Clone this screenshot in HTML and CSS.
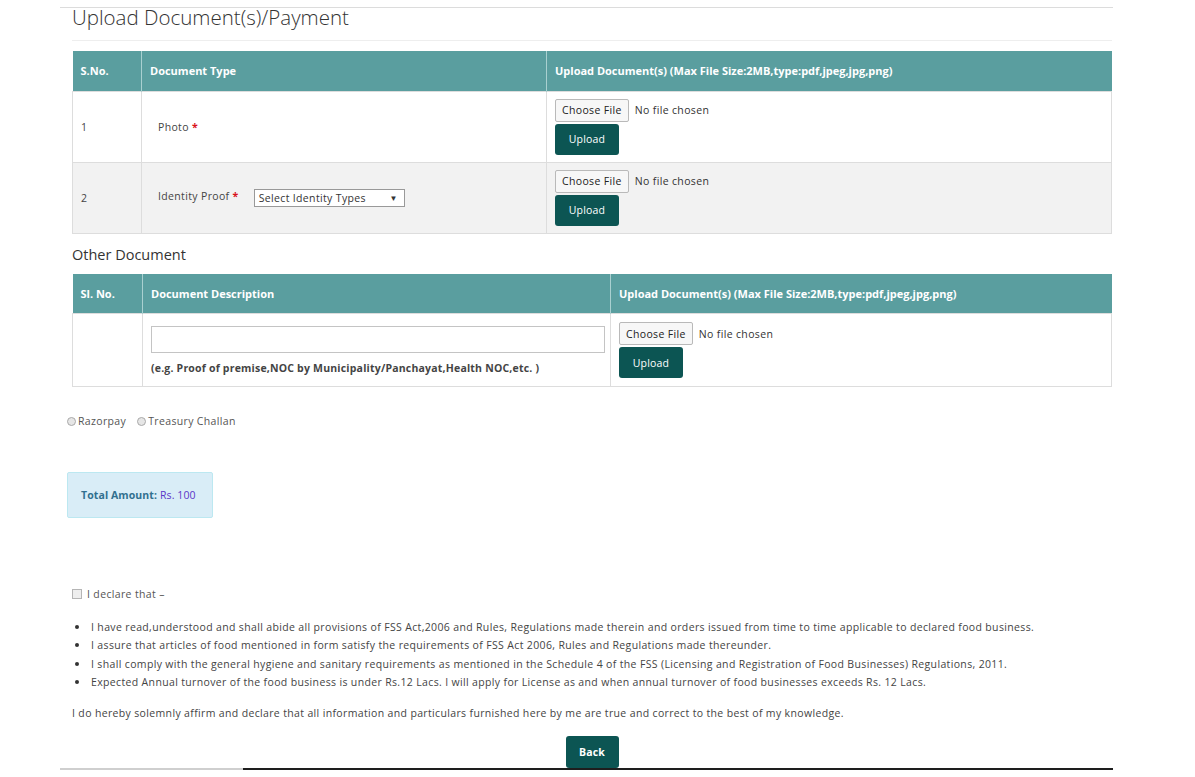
FILE: index.html
```html
<!DOCTYPE html>
<html lang="en">
<head>
<meta charset="utf-8">
<title>Upload Document(s)/Payment</title>
<link rel="stylesheet" href="styles.css">
</head>
<body>
<div class="page">
  <div class="topline"></div>
  <h2 class="title">Upload Document(s)/Payment</h2>
  <div class="rule"></div>

  <table class="grid docs">
    <colgroup><col class="c1"><col class="c2"><col class="c3"></colgroup>
    <thead>
      <tr><th>S.No.</th><th>Document Type</th><th>Upload Document(s) (Max File Size:2MB,type:pdf,jpeg,jpg,png)</th></tr>
    </thead>
    <tbody>
      <tr>
        <td>1</td>
        <td><span class="doc-label">Photo <span class="req">*</span></span></td>
        <td>
          <div class="file"><span class="file-btn">Choose File</span><span class="file-name">No file chosen</span></div>
          <button class="btn">Upload</button>
        </td>
      </tr>
      <tr class="alt">
        <td>2</td>
        <td><span class="doc-label">Identity Proof <span class="req">*</span></span><span class="select">Select Identity Types<span class="caret">&#9660;</span></span></td>
        <td>
          <div class="file"><span class="file-btn">Choose File</span><span class="file-name">No file chosen</span></div>
          <button class="btn">Upload</button>
        </td>
      </tr>
    </tbody>
  </table>

  <h3 class="subtitle">Other Document</h3>

  <table class="grid other">
    <colgroup><col class="o1"><col class="o2"><col class="o3"></colgroup>
    <thead>
      <tr><th>Sl. No.</th><th>Document Description</th><th>Upload Document(s) (Max File Size:2MB,type:pdf,jpeg,jpg,png)</th></tr>
    </thead>
    <tbody>
      <tr>
        <td></td>
        <td>
          <div class="text-input"></div>
          <div class="hint">(e.g. Proof of premise,NOC by Municipality/Panchayat,Health NOC,etc. )</div>
        </td>
        <td>
          <div class="file"><span class="file-btn">Choose File</span><span class="file-name">No file chosen</span></div>
          <button class="btn">Upload</button>
        </td>
      </tr>
    </tbody>
  </table>

  <div class="pay">
    <label class="radio"><span class="dot"></span>Razorpay</label>
    <label class="radio"><span class="dot"></span>Treasury Challan</label>
  </div>

  <div class="total"><b>Total Amount:</b> <span class="amount">Rs. 100</span></div>

  <label class="declare"><span class="box"></span>I declare that &ndash;</label>

  <ul class="points">
    <li>I have read,understood and shall abide all provisions of FSS Act,2006 and Rules, Regulations made therein and orders issued from time to time applicable to declared food business.</li>
    <li>I assure that articles of food mentioned in form satisfy the requirements of FSS Act 2006, Rules and Regulations made thereunder.</li>
    <li>I shall comply with the general hygiene and sanitary requirements as mentioned in the Schedule 4 of the FSS (Licensing and Registration of Food Businesses) Regulations, 2011.</li>
    <li>Expected Annual turnover of the food business is under Rs.12 Lacs. I will apply for License as and when annual turnover of food businesses exceeds Rs. 12 Lacs.</li>
  </ul>

  <p class="affirm">I do hereby solemnly affirm and declare that all information and particulars furnished here by me are true and correct to the best of my knowledge.</p>

  <div class="actions"><button class="btn back">Back</button></div>
  <div class="bottomline"><span class="seg-light"></span><span class="seg-dark"></span></div>
</div>
</body>
</html>
```
FILE: styles.css
```css
* { box-sizing: border-box; }

body {
  margin: 0;
  background: #fff;
  font-family: "Open Sans", "Liberation Sans", sans-serif;
  font-size: 10.5px;
  letter-spacing: 0.35px;
  color: #555;
}

.page {
  margin-left: 60px;
  width: 1053px;
}

.topline {
  margin-top: 7px;
  border-top: 1px solid #dcdcdc;
}

.title {
  margin: -4px 0 0 12px;
  font-size: 20.5px;
  font-weight: 300;
  line-height: 26px;
  color: #333;
  letter-spacing: 0;
}

.rule {
  margin: 10px 0 0 12px;
  width: 1040px;
  border-top: 1px solid #eee;
}

/* data tables */
.grid {
  margin: 10px 0 0 12px;
  width: 1040px;
  border-collapse: collapse;
  table-layout: fixed;
}
.grid th {
  background: #5a9e9f;
  color: #fff;
  font-weight: 700;
  text-align: left;
  height: 40px;
  padding: 0 8px;
  font-size: 11px;
  letter-spacing: 0;
  border-left: 1px solid #a9d0d0;
}
.grid th:first-child { border-left: 0; }
.grid td {
  border: 1px solid #ddd;
  padding: 7px 8px;
  vertical-align: middle;
  color: #444;
}
.grid tr.alt td { background: #f2f2f2; }

.c1 { width: 69px; }
.c2 { width: 405px; }

.docs tbody tr { height: 71px; }

.doc-label { margin-left: 8px; }
.req { color: #d9111b; font-weight: 700; }

.select {
  display: inline-flex;
  justify-content: space-between;
  align-items: center;
  margin-left: 15px;
  width: 151px;
  height: 18px;
  padding: 0 4px;
  border: 1px solid #999;
  background: #fff;
  color: #333;
  font-size: 10.5px;
  vertical-align: middle;
}
.caret { font-size: 8px; margin-right: 2px; }

.file {
  display: flex;
  align-items: center;
  height: 23px;
}
.file-btn {
  display: inline-flex;
  align-items: center;
  height: 23px;
  padding: 0 6px;
  border: 1px solid #b9b9b9;
  border-radius: 2px;
  background: #f7f7f7;
  color: #222;
}
.file-name {
  margin-left: 6px;
  color: #333;
}

.btn {
  display: block;
  margin-top: 2px;
  width: 64px;
  height: 31px;
  border: 0;
  border-radius: 3px;
  background: #0c5553;
  color: #fff;
  font-family: "Open Sans", "Liberation Sans", sans-serif;
  font-size: 10.5px;
  letter-spacing: 0.2px;
  padding: 0;
}

.subtitle {
  margin: 11px 0 0 12px;
  font-size: 14.5px;
  font-weight: 400;
  line-height: 20px;
  letter-spacing: 0;
  color: #333;
}

.other { margin-top: 9px; }
.o1 { width: 70px; }
.o2 { width: 468px; }
.other tbody tr { height: 73px; }
.other td { padding-top: 6px; padding-bottom: 6px; }

.text-input {
  width: 454px;
  height: 27px;
  border: 1px solid #c4c4c4;
  background: #fff;
}
.hint {
  margin-top: 8px;
  font-weight: 700;
  color: #444;
  font-size: 10.5px;
  letter-spacing: 0.2px;
}

/* payment choice */
.pay {
  display: flex;
  gap: 11px;
  margin: 27px 0 0 7px;
  color: #555;
}
.radio { display: inline-flex; align-items: center; }
.dot {
  width: 9px;
  height: 9px;
  margin-right: 2px;
  border: 1px solid #a9a9a9;
  border-radius: 50%;
  background: #e6e6e6;
}

.total {
  margin: 44px 0 0 7px;
  width: 146px;
  height: 46px;
  padding: 15px 0 0 13px;
  background: #d9edf7;
  border: 1px solid #bce8f1;
  border-radius: 2px;
  color: #31708f;
  letter-spacing: 0.1px;
}
.amount { color: #5b35c8; }

.declare {
  display: flex;
  align-items: center;
  margin: 69px 0 0 12px;
  color: #555;
}
.box {
  width: 10px;
  height: 10px;
  margin-right: 5px;
  border: 1px solid #b5b5b5;
  background: #eee;
}

.points {
  margin: 17px 0 0 12px;
  padding: 0 0 0 19px;
  list-style: none;
  color: #444;
}
.points li {
  position: relative;
  line-height: 18.3px;
}
.points li::before {
  content: "";
  position: absolute;
  left: -16px;
  top: 7px;
  width: 4px;
  height: 4px;
  border-radius: 50%;
  background: #333;
}

.affirm {
  margin: 15px 0 0 12px;
  color: #444;
}

.actions {
  display: flex;
  justify-content: center;
  margin-left: 12px;
  width: 1040px;
  margin-top: 16px;
}
.back {
  margin: 0;
  width: 53px;
  height: 32px;
  font-weight: 700;
}

.bottomline {
  display: flex;
  height: 2px;
}
.seg-light { width: 183px; background: #cfcfcf; }
.seg-dark { flex: 1; background: #1e1e1e; }
```
